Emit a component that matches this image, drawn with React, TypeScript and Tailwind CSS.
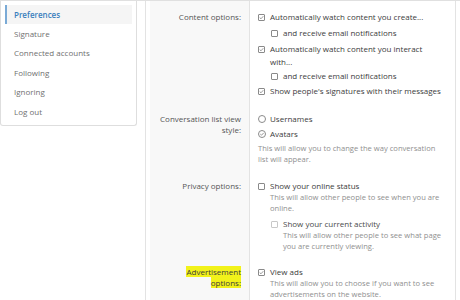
import React from "react";

const nav = ["Preferences", "Signature", "Connected accounts", "Following", "Ignoring", "Log out"];

function Box({ checked, faint }: { checked?: boolean; faint?: boolean }) {
  const c = faint ? "#c8c8c8" : "#8a8a8a";
  return (
    <svg width="7" height="7" viewBox="0 0 7 7" className="shrink-0 mt-[3.5px] mr-[1px]">
      <rect x="0.5" y="0.5" width="6" height="6" rx="0.5" fill="none" stroke={c} />
      {checked && <path d="M1.7 3.6 L3 4.8 L5.3 2.2" fill="none" stroke={c} strokeWidth="0.85" />}
    </svg>
  );
}

function Radio({ checked }: { checked?: boolean }) {
  return (
    <svg width="8" height="8" viewBox="0 0 8 8" className="shrink-0 mt-[3px]">
      <circle cx="4" cy="4" r="3.5" fill="none" stroke="#8a8a8a" />
      {checked && <path d="M2.3 4.1 L3.5 5.2 L5.7 2.9" fill="none" stroke="#8a8a8a" strokeWidth="0.9" />}
    </svg>
  );
}

function Item({
  children,
  icon,
  className = "",
  hint,
  faint,
}: {
  children: React.ReactNode;
  icon: React.ReactNode;
  className?: string;
  hint?: React.ReactNode;
  faint?: boolean;
}) {
  return (
    <div className={`flex gap-[4px] ${className}`}>
      {icon}
      <div>
        <div className={`leading-[13px] ${faint ? "text-[#4a4a4a]" : "text-[#3c3c3c]"}`}>{children}</div>
        {hint && <div className="text-[7.6px] leading-[10.5px] text-[#8f8f8f]">{hint}</div>}
      </div>
    </div>
  );
}

function Row({ label, children, className = "" }: { label: React.ReactNode; children: React.ReactNode; className?: string }) {
  return (
    <div className="flex">
      <div className={`w-[100px] shrink-0 bg-[#f8f8f8] border-r border-[#e3e3e3] pl-[8px] pr-[8px] text-right text-[#555] leading-[11px] ${className}`}>
        {label}
      </div>
      <div className={`flex-1 pl-[8px] pr-[9px] ${className}`}>{children}</div>
    </div>
  );
}

export default function App() {
  return (
    <div className="w-[460px] h-[300px] overflow-hidden bg-white border-t border-[#e0e0e0] flex font-['Open_Sans',sans-serif] text-[8px]">
      <div className="w-[137px] shrink-0">
        <div className="h-[125px] border border-t-0 border-[#dedede] rounded-b-[3px] px-[4px] pt-[4px]">
          {nav.map((n, i) => (
            <div
              key={n}
              className={`h-[19.4px] flex items-center ${
                i === 0
                  ? "bg-[#f5f5f5] border-l-2 border-[#7aaad6] pl-[7px] text-[#3a7fbd] font-semibold"
                  : "pl-[9px] text-[#707070]"
              }`}
            >
              {n}
            </div>
          ))}
        </div>
      </div>

      <div className="ml-[8px] flex-1 border-l border-[#e3e3e3] px-[4px]">
        <div className="border-r border-[#e3e3e3] h-full flex flex-col">
          <Row label={<div className="leading-[13px]">Content options:</div>} className="pt-[9px] pb-[9px]">
            <Item icon={<Box checked />}>Automatically watch content you create...</Item>
            <Item icon={<Box />} className="ml-[13px] mt-[3px]">and receive email notifications</Item>
            <Item icon={<Box checked />} className="mt-[3px]">Automatically watch content you interact with...</Item>
            <Item icon={<Box />} className="ml-[13px] mt-[1px]">and receive email notifications</Item>
            <Item icon={<Box checked />} className="mt-[2px]">Show people's signatures with their messages</Item>
          </Row>

          <Row label={<div className="pt-[1px]">Conversation list view style:</div>} className="pt-[6px] pb-[8px]">
            <Item icon={<Radio />}>Usernames</Item>
            <Item icon={<Radio checked />} className="mt-[2px]">Avatars</Item>
            <div className="mt-[3px] text-[7.6px] leading-[11px] text-[#8f8f8f]">
              This will allow you to change the way conversation list will appear.
            </div>
          </Row>

          <Row label={<div className="leading-[13px]">Privacy options:</div>} className="pt-[6px] pb-[10px]">
            <Item icon={<Box />} hint="This will allow other people to see when you are online.">
              Show your online status
            </Item>
            <Item
              icon={<Box faint />}
              faint
              className="ml-[13px] mt-[4px]"
              hint="This will allow other people to see what page you are currently viewing."
            >
              Show your current activity
            </Item>
          </Row>

          <Row
            label={
              <div className="leading-[11px] pt-[1px] text-[#3c3c3c]">
                <span className="bg-[#f2f21a] box-decoration-clone">Advertisement options:</span>
              </div>
            }
            className="pt-[4px] pb-[10px]"
          >
            <Item icon={<Box checked />} hint="This will allow you to choose if you want to see advertisements on the website.">
              View ads
            </Item>
          </Row>
          <div className="flex flex-1">
            <div className="w-[100px] bg-[#f8f8f8] border-r border-[#e3e3e3]" />
          </div>
        </div>
      </div>
    </div>
  );
}
